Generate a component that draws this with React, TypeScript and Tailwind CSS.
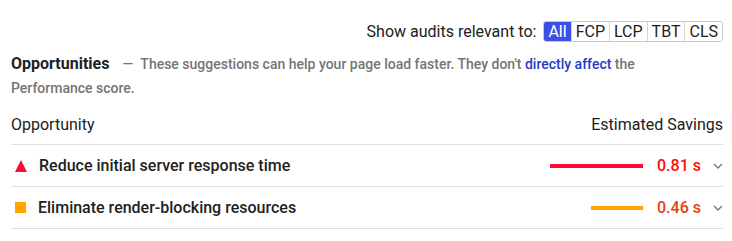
import React from "react";

function Chevron() {
  return (
    <svg width="10" height="6" viewBox="0 0 10 6" className="block">
      <path d="M1 1 L5 5 L9 1" fill="none" stroke="#757575" strokeWidth="1.3" />
    </svg>
  );
}

export default function App() {
  const filters = ["All", "FCP", "LCP", "TBT", "CLS"];
  return (
    <div
      className="w-[732px] h-[241px] bg-white text-[#212121] pl-[11px] pr-[9px] overflow-hidden"
      style={{ fontFamily: "Roboto, 'Liberation Sans', sans-serif" }}
    >
      <div className="mt-[21px] h-[21px] flex justify-end items-center">
        <span className="text-[16px] mr-[7px]">Show audits relevant to:</span>
        <div className="flex h-[21px] border border-[#c8c8c8] rounded-[3px] overflow-hidden text-[16px] leading-[19px]">
          {filters.map((f, i) => (
            <div
              key={f}
              className={
                (i === 0
                  ? "bg-[#3c4ee4] text-white px-[4px] "
                  : "bg-white text-[#212121] px-[4px] border-l border-[#d6d6d6] ") +
                "flex items-center"
              }
            >
              {f}
            </div>
          ))}
        </div>
      </div>

      <div className="mt-[10px] text-[14px] leading-[24px] font-medium text-[#757575] pr-[60px]">
        <span className="text-[16px] font-bold text-[#212121] mr-[13px]">Opportunities</span>
        <span className="mr-[4px]">—</span> These suggestions can help your page load faster. They don't{" "}
        <span className="text-[#1e3fbf]">directly affect</span> the Performance score.
      </div>

      <div className="pt-[15px] pb-[9px] flex justify-between text-[16px] leading-[20px] border-b border-[#e0e0e0]">
        <span>Opportunity</span>
        <span>Estimated Savings</span>
      </div>

      <div className="h-[42px] flex items-center border-b border-[#e0e0e0] text-[16px]">
        <svg width="12" height="12" viewBox="0 0 12 12" className="ml-[4px] mr-[12px] block">
          <path d="M6 0 L12 12 L0 12 Z" fill="#ff0a35" />
        </svg>
        <span className="flex-1 font-medium">Reduce initial server response time</span>
        <div className="w-[93px] h-[4px] bg-[#ff0a35]" />
        <span className="ml-[14px] w-[45px] text-[#ff0a0a] font-medium">0.81 s</span>
        <span className="ml-[11px]">
          <Chevron />
        </span>
      </div>

      <div className="h-[42px] flex items-center border-b border-[#e0e0e0] text-[16px]">
        <div className="w-[11px] h-[11px] bg-[#ffa400] ml-[4px] mr-[12px]" />
        <span className="flex-1 font-medium">Eliminate render-blocking resources</span>
        <div className="w-[52px] h-[4px] bg-[#ffa400]" />
        <span className="ml-[14px] w-[45px] text-[#e2420f] font-medium">0.46 s</span>
        <span className="ml-[11px]">
          <Chevron />
        </span>
      </div>
    </div>
  );
}
